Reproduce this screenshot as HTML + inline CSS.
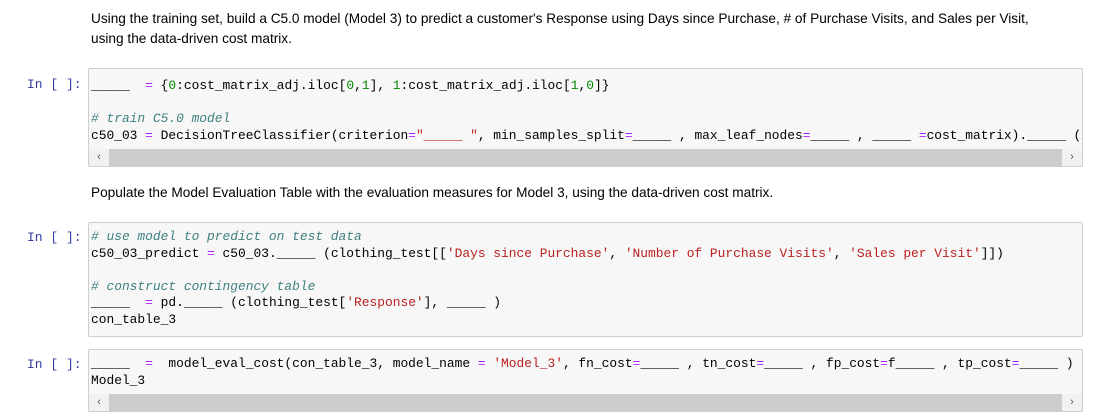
<!DOCTYPE html>
<html><head><style>
body{margin:0;background:#fff;width:1094px;height:418px;overflow:hidden;position:relative;font-family:"Liberation Sans",Arial,sans-serif}
.md{position:absolute;left:91px;font-size:13.65px;color:#000;line-height:20px}
.p{position:absolute;left:27px;font-family:"Liberation Mono",monospace;font-size:13px;color:#303F9F}
.box{position:absolute;left:88px;width:993px;background:#f7f7f7;border:1px solid #cfcfcf;border-radius:2px;overflow:hidden}
pre{margin:0;padding:0 0 0 2px;font-family:"Liberation Mono",monospace;font-size:12.9px;line-height:16.5px;color:#000;white-space:pre}
.c{color:#408080;font-style:italic}.o{color:#AA22FF}.n{color:#008800}.s{color:#BA2121}
.sb{position:absolute;left:0;right:0;bottom:0;height:17px;background:#cdcdcd}
.sb .l,.sb .r{position:absolute;top:0;width:20px;height:17px;background:#f1f1f1;font-size:11px;color:#555;text-align:center;line-height:17px}
.sb .l{left:0}.sb .r{right:0}
</style></head><body>
<div class="md" style="top:9px">Using the training set, build a C5.0 model (Model 3) to predict a customer's Response using Days since Purchase, # of Purchase Visits, and Sales per Visit,<br>using the data-driven cost matrix.</div>
<div class="p" style="top:77px">In [ ]:</div>
<div class="box" style="top:68px;height:97px"><pre style="margin-top:9px">_____  <span class="o">=</span> {<span class="n">0</span>:cost_matrix_adj.iloc[<span class="n">0</span>,<span class="n">1</span>], <span class="n">1</span>:cost_matrix_adj.iloc[<span class="n">1</span>,<span class="n">0</span>]}

<span class="c"># train C5.0 model</span>
c50_03 <span class="o">=</span> DecisionTreeClassifier(criterion<span class="o">=</span><span class="s">"_____ "</span>, min_samples_split<span class="o">=</span>_____ , max_leaf_nodes<span class="o">=</span>_____ , _____ <span class="o">=</span>cost_matrix)._____ (X</pre>
<div class="sb"><div class="l">&lsaquo;</div><div class="r">&rsaquo;</div></div></div>
<div class="md" style="top:183px">Populate the Model Evaluation Table with the evaluation measures for Model 3, using the data-driven cost matrix.</div>
<div class="p" style="top:230px">In [ ]:</div>
<div class="box" style="top:222px;height:113px"><pre style="margin-top:6px"><span class="c"># use model to predict on test data</span>
c50_03_predict <span class="o">=</span> c50_03._____ (clothing_test[[<span class="s">'Days since Purchase'</span>, <span class="s">'Number of Purchase Visits'</span>, <span class="s">'Sales per Visit'</span>]])

<span class="c"># construct contingency table</span>
_____  <span class="o">=</span> pd._____ (clothing_test[<span class="s">'Response'</span>], _____ )
con_table_3</pre></div>
<div class="p" style="top:357px">In [ ]:</div>
<div class="box" style="top:349px;height:61px"><pre style="margin-top:6px">_____  <span class="o">=</span>  model_eval_cost(con_table_3, model_name <span class="o">=</span> <span class="s">'Model_3'</span>, fn_cost<span class="o">=</span>_____ , tn_cost<span class="o">=</span>_____ , fp_cost<span class="o">=</span>f_____ , tp_cost<span class="o">=</span>_____ )
Model_3</pre>
<div class="sb"><div class="l">&lsaquo;</div><div class="r">&rsaquo;</div></div></div>
</body></html>
